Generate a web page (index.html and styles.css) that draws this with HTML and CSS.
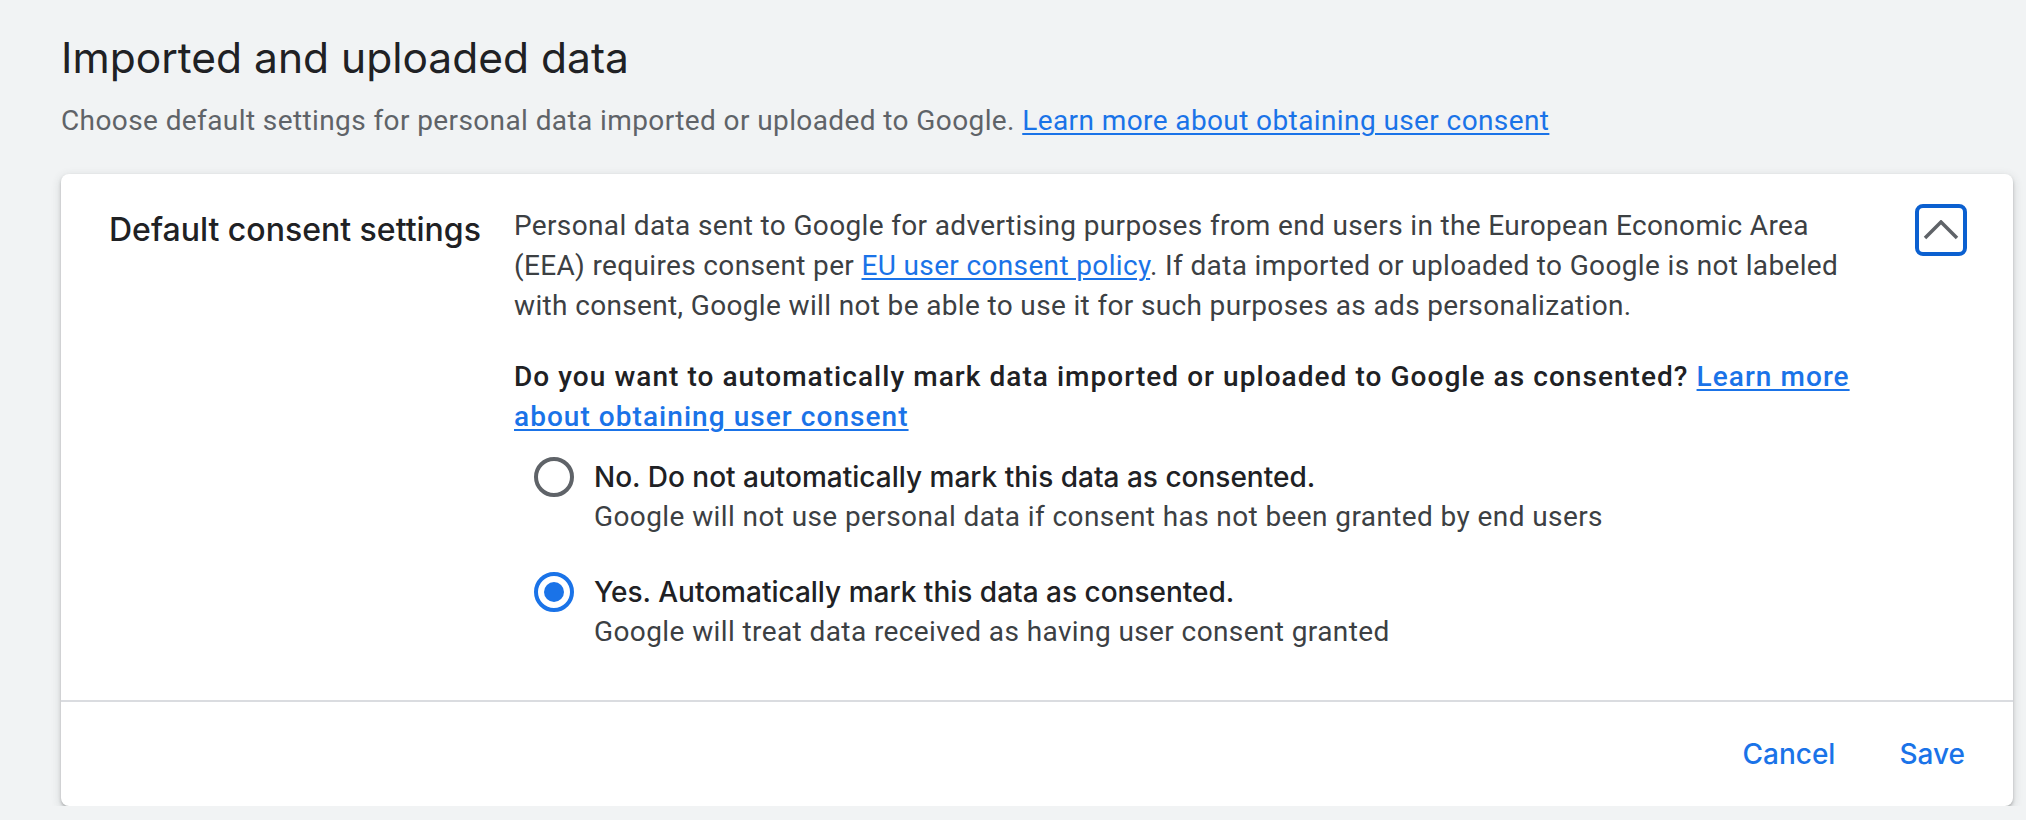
FILE: index.html
```html
<!DOCTYPE html>
<html lang="en">
<head>
<meta charset="utf-8">
<title>Imported and uploaded data</title>
<link rel="stylesheet" href="styles.css">
</head>
<body>
<main class="page">
  <h1 class="page-title">Imported and uploaded data</h1>
  <p class="page-subtitle">Choose default settings for personal data imported or uploaded to Google. <a href="#" class="link">Learn more about obtaining user consent</a></p>

  <section class="card">
    <div class="card-body">
      <h2 class="card-label">Default consent settings</h2>
      <div class="card-content">
        <p class="para">Personal data sent to Google for advertising purposes from end users in the European Economic Area (EEA) requires consent per <a href="#" class="link">EU user consent policy</a>. If data imported or uploaded to Google is not labeled with consent, Google will not be able to use it for such purposes as ads personalization.</p>
        <p class="question">Do you want to automatically mark data imported or uploaded to Google as consented? <a href="#" class="link">Learn more about obtaining user consent</a></p>
        <div class="options" role="radiogroup">
          <div class="option" role="radio" aria-checked="false">
            <span class="radio-wrap"><span class="radio"></span></span>
            <span class="option-text">
              <span class="option-title">No. Do not automatically mark this data as consented.</span>
              <span class="option-desc">Google will not use personal data if consent has not been granted by end users</span>
            </span>
          </div>
          <div class="option" role="radio" aria-checked="true">
            <span class="radio-wrap"><span class="radio radio-checked"></span></span>
            <span class="option-text">
              <span class="option-title">Yes. Automatically mark this data as consented.</span>
              <span class="option-desc">Google will treat data received as having user consent granted</span>
            </span>
          </div>
        </div>
      </div>
      <button class="collapse-btn" aria-label="Collapse">
        <svg width="36" height="20" viewBox="0 0 36 20"><polyline points="2,18 18,2 34,18" fill="none" stroke="#5f6368" stroke-width="3.5"/></svg>
      </button>
    </div>
    <div class="card-footer">
      <button class="text-btn">Cancel</button>
      <button class="text-btn">Save</button>
    </div>
  </section>
</main>
</body>
</html>
```

FILE: styles.css
```css
* { box-sizing: border-box; }
html, body { margin: 0; }
body {
  background: #f1f3f4;
  font-family: Roboto, "Liberation Sans", sans-serif;
  color: #3c4043;
}
.page {
  padding: 30px 13px 0 61px;
}
.page-title {
  margin: 0;
  font-family: Inter, Roboto, sans-serif;
  font-weight: 400;
  font-size: 42.5px;
  line-height: 56px;
  color: #202124;
}
.page-subtitle {
  margin: 15px 0 0;
  font-size: 28px;
  line-height: 40px;
  letter-spacing: 0.4px;
  color: #5f6368;
}
.link {
  color: #1a73e8;
  text-decoration: underline;
  text-decoration-thickness: 2px;
  text-underline-offset: 3px;
}
.card {
  margin-top: 33px;
  background: #fff;
  border-radius: 8px;
  box-shadow: 0 2px 3px 0 rgba(60,64,67,.3), 0 3px 8px 2px rgba(60,64,67,.12);
}
.card-body {
  display: flex;
  align-items: flex-start;
  padding: 32px 46px 48px 48px;
}
.card-label {
  flex: none;
  width: 405px;
  margin: 0;
  font-family: Inter, Roboto, sans-serif;
  font-weight: 500;
  font-size: 32px;
  line-height: 48px;
  color: #202124;
}
.card-content {
  flex: 1;
  min-width: 0;
  margin-right: 40px;
}
.para {
  margin: 0;
  font-size: 28px;
  line-height: 40px;
  letter-spacing: 0.35px;
}
.question {
  margin: 31px 0 0;
  font-size: 28px;
  font-weight: 500;
  line-height: 40px;
  letter-spacing: 1.05px;
  color: #202124;
}
.options {
  margin-top: 20px;
  display: flex;
  flex-direction: column;
  gap: 35px;
}
.option {
  display: flex;
  align-items: flex-start;
}
.radio-wrap {
  flex: none;
  width: 80px;
  height: 40px;
  display: flex;
  align-items: center;
  justify-content: center;
}
.radio {
  width: 40px;
  height: 40px;
  border: 4px solid #5f6368;
  border-radius: 50%;
  display: flex;
  align-items: center;
  justify-content: center;
}
.radio-checked {
  border-color: #1a73e8;
}
.radio-checked::after {
  content: "";
  width: 20px;
  height: 20px;
  border-radius: 50%;
  background: #1a73e8;
}
.option-text {
  display: flex;
  flex-direction: column;
}
.option-title {
  font-family: Inter, Roboto, sans-serif;
  font-weight: 500;
  font-size: 28px;
  line-height: 40px;
  color: #202124;
}
.option-desc {
  font-size: 28px;
  line-height: 40px;
  letter-spacing: 0.4px;
  color: #3c4043;
}
.collapse-btn {
  flex: none;
  margin-top: -2px;
  width: 52px;
  height: 52px;
  padding: 0;
  border: 4px solid #0b60d0;
  border-radius: 8px;
  background: #fff;
  display: flex;
  align-items: center;
  justify-content: center;
}
.card-footer {
  border-top: 2px solid #dadce0;
  height: 106px;
  display: flex;
  justify-content: flex-end;
  align-items: center;
  gap: 32px;
  padding-right: 32px;
}
.text-btn {
  height: 72px;
  padding: 0 16px;
  border: none;
  background: none;
  font-family: Inter, Roboto, sans-serif;
  font-weight: 500;
  font-size: 28px;
  color: #1a73e8;
}
```
